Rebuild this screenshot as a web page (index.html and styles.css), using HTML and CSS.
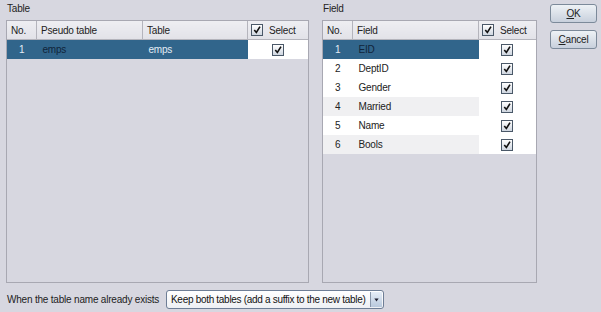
FILE: index.html
```html
<!DOCTYPE html>
<html lang="en">
  <head>
    <meta charset="UTF-8" />
    <title>Import tables</title>
    <link rel="stylesheet" href="styles.css">
  </head>
  <body>
    <div class="dialog">
      <div class="top">
        <div class="panel panel-table">
          <div class="caption">Table</div>
          <div class="grid-box">
            <table class="grid">
              <thead>
                <tr>
                  <th class="c-no">No.</th>
                  <th class="c-pseudo">Pseudo table</th>
                  <th class="c-table">Table</th>
                  <th class="c-sel"><span class="cb"><svg viewBox="0 0 11 11"><path d="M2.5 5.5 L4.8 8.2 L8.8 1.8" /></svg></span>Select</th>
                </tr>
              </thead>
              <tbody>
                <tr class="selected">
                  <td class="c-no num">1</td>
                  <td class="c-pseudo dark">emps</td>
                  <td class="c-table">emps</td>
                  <td class="c-sel"><span class="cb"><svg viewBox="0 0 11 11"><path d="M2.5 5.5 L4.8 8.2 L8.8 1.8" /></svg></span></td>
                </tr>
              </tbody>
            </table>
          </div>
        </div>

        <div class="panel panel-field">
          <div class="caption">Field</div>
          <div class="grid-box">
            <table class="grid">
              <thead>
                <tr>
                  <th class="c-no">No.</th>
                  <th class="c-field">Field</th>
                  <th class="c-sel"><span class="cb"><svg viewBox="0 0 11 11"><path d="M2.5 5.5 L4.8 8.2 L8.8 1.8" /></svg></span>Select</th>
                </tr>
              </thead>
              <tbody>
                <tr class="selected">
                  <td class="c-no num">1</td>
                  <td class="c-field dark">EID</td>
                  <td class="c-sel"><span class="cb"><svg viewBox="0 0 11 11"><path d="M2.5 5.5 L4.8 8.2 L8.8 1.8" /></svg></span></td>
                </tr>
                <tr>
                  <td class="c-no num">2</td>
                  <td class="c-field">DeptID</td>
                  <td class="c-sel"><span class="cb"><svg viewBox="0 0 11 11"><path d="M2.5 5.5 L4.8 8.2 L8.8 1.8" /></svg></span></td>
                </tr>
                <tr>
                  <td class="c-no num">3</td>
                  <td class="c-field">Gender</td>
                  <td class="c-sel"><span class="cb"><svg viewBox="0 0 11 11"><path d="M2.5 5.5 L4.8 8.2 L8.8 1.8" /></svg></span></td>
                </tr>
                <tr class="alt">
                  <td class="c-no num">4</td>
                  <td class="c-field">Married</td>
                  <td class="c-sel"><span class="cb"><svg viewBox="0 0 11 11"><path d="M2.5 5.5 L4.8 8.2 L8.8 1.8" /></svg></span></td>
                </tr>
                <tr>
                  <td class="c-no num">5</td>
                  <td class="c-field">Name</td>
                  <td class="c-sel"><span class="cb"><svg viewBox="0 0 11 11"><path d="M2.5 5.5 L4.8 8.2 L8.8 1.8" /></svg></span></td>
                </tr>
                <tr class="alt">
                  <td class="c-no num">6</td>
                  <td class="c-field">Bools</td>
                  <td class="c-sel"><span class="cb"><svg viewBox="0 0 11 11"><path d="M2.5 5.5 L4.8 8.2 L8.8 1.8" /></svg></span></td>
                </tr>
              </tbody>
            </table>
          </div>
        </div>

        <div class="buttons">
          <button class="btn"><u>O</u>K</button>
          <button class="btn"><u>C</u>ancel</button>
        </div>
      </div>

      <div class="bottom">
        <span class="bottom-label">When the table name already exists</span>
        <div class="combo">
          <span class="combo-text">Keep both tables (add a suffix to the new table)</span>
          <span class="combo-arrow"><svg viewBox="0 0 7 5"><path d="M0.5 0.5 L6.5 0.5 L3.5 4.5 Z" /></svg></span>
        </div>
      </div>
    </div>
  </body>
</html>
```

FILE: styles.css
```css
body {
  margin: 0;
  background: #d7d7e0;
  font-family: "Liberation Sans", Arial, sans-serif;
  font-size: 10px;
  letter-spacing: -0.2px;
  color: #222;
}

.dialog {
  width: 601px;
  height: 312px;
  display: flex;
  flex-direction: column;
  padding: 3px 0 0 6px;
  box-sizing: border-box;
}

.top {
  display: flex;
  height: 280px;
}

.panel {
  display: flex;
  flex-direction: column;
}

.panel-table {
  width: 303px;
}

.panel-field {
  width: 215px;
  margin-left: 13px;
}

.caption {
  height: 17px;
  line-height: 12px;
  padding-left: 1px;
}

.grid-box {
  flex: 1;
  border: 1px solid #a8a8b2;
  background: #d7d7e0;
}

.grid {
  border-collapse: collapse;
  width: 100%;
  table-layout: fixed;
}

.grid th {
  height: 18px;
  padding: 0 0 0 4px;
  text-align: left;
  font-weight: normal;
  background: linear-gradient(#eeeef2, #e2e2e8);
  border-right: 1px solid #b4b4bc;
  border-bottom: 1px solid #b4b4bc;
  color: #222;
  white-space: nowrap;
}

.grid th:last-child {
  border-right: none;
}

.grid td {
  height: 19px;
  padding: 0 0 0 6px;
  background: #fff;
  white-space: nowrap;
}

.grid tr.alt td {
  background: #f0f0f2;
}

.grid td.num {
  text-align: center;
  padding: 0;
}

.grid tr.selected td {
  background: #31658b;
  color: #e4ecf4;
}

.grid tr.selected td.dark {
  color: #10243a;
}

.grid td.c-sel,
.grid tr.alt td.c-sel,
.grid tr.selected td.c-sel {
  background: #fff;
  text-align: center;
  padding: 0;
}

.panel-table .c-no { width: 25px; }
.panel-table .c-pseudo { width: 101px; }
.panel-table .c-table { width: 100px; }

.panel-field .c-no { width: 25px; }
.panel-field .c-field { width: 121px; }

.grid th.c-sel {
  padding-left: 3px;
}

.cb {
  display: inline-block;
  width: 10px;
  height: 10px;
  border: 1px solid #4a5868;
  background: linear-gradient(#ffffff, #cfd6e0);
  vertical-align: -2px;
  box-sizing: content-box;
}

th .cb {
  margin-right: 6px;
}

.cb svg {
  display: block;
  width: 10px;
  height: 10px;
}

.cb path {
  fill: none;
  stroke: #111;
  stroke-width: 1.8;
}

.buttons {
  display: flex;
  flex-direction: column;
  gap: 7px;
  margin-left: 13px;
  padding-top: 1px;
}

.btn {
  width: 47px;
  height: 19px;
  padding: 0;
  border: 1px solid #7c8a9a;
  border-radius: 3px;
  background: linear-gradient(#eef2f6, #c8d0dc);
  font-family: "Liberation Sans", Arial, sans-serif;
  font-size: 10px;
  letter-spacing: -0.2px;
  color: #222;
}

.bottom {
  display: flex;
  align-items: center;
  margin-top: 7px;
  height: 19px;
}

.bottom-label {
  flex-shrink: 0;
  white-space: nowrap;
  padding-left: 1px;
  width: 159px;
}

.combo {
  flex-shrink: 0;
  display: flex;
  align-items: center;
  width: 218px;
  height: 19px;
  box-sizing: border-box;
  border: 1px solid #6e7e96;
  border-radius: 3px;
  background: linear-gradient(#ffffff, #eef0f4);
}

.combo-text {
  flex: 1;
  padding-left: 4px;
  color: #111;
  letter-spacing: -0.3px;
  white-space: nowrap;
  overflow: hidden;
}

.combo-arrow {
  flex-shrink: 0;
  width: 11px;
  height: 15px;
  margin-right: 1px;
  border-left: 1px solid #8a98ac;
  background: linear-gradient(#e6eef8, #b8c8dc);
  display: flex;
  align-items: center;
  justify-content: center;
}

.combo-arrow svg {
  width: 5px;
  height: 4px;
}

.combo-arrow path {
  fill: #223;
}
```
